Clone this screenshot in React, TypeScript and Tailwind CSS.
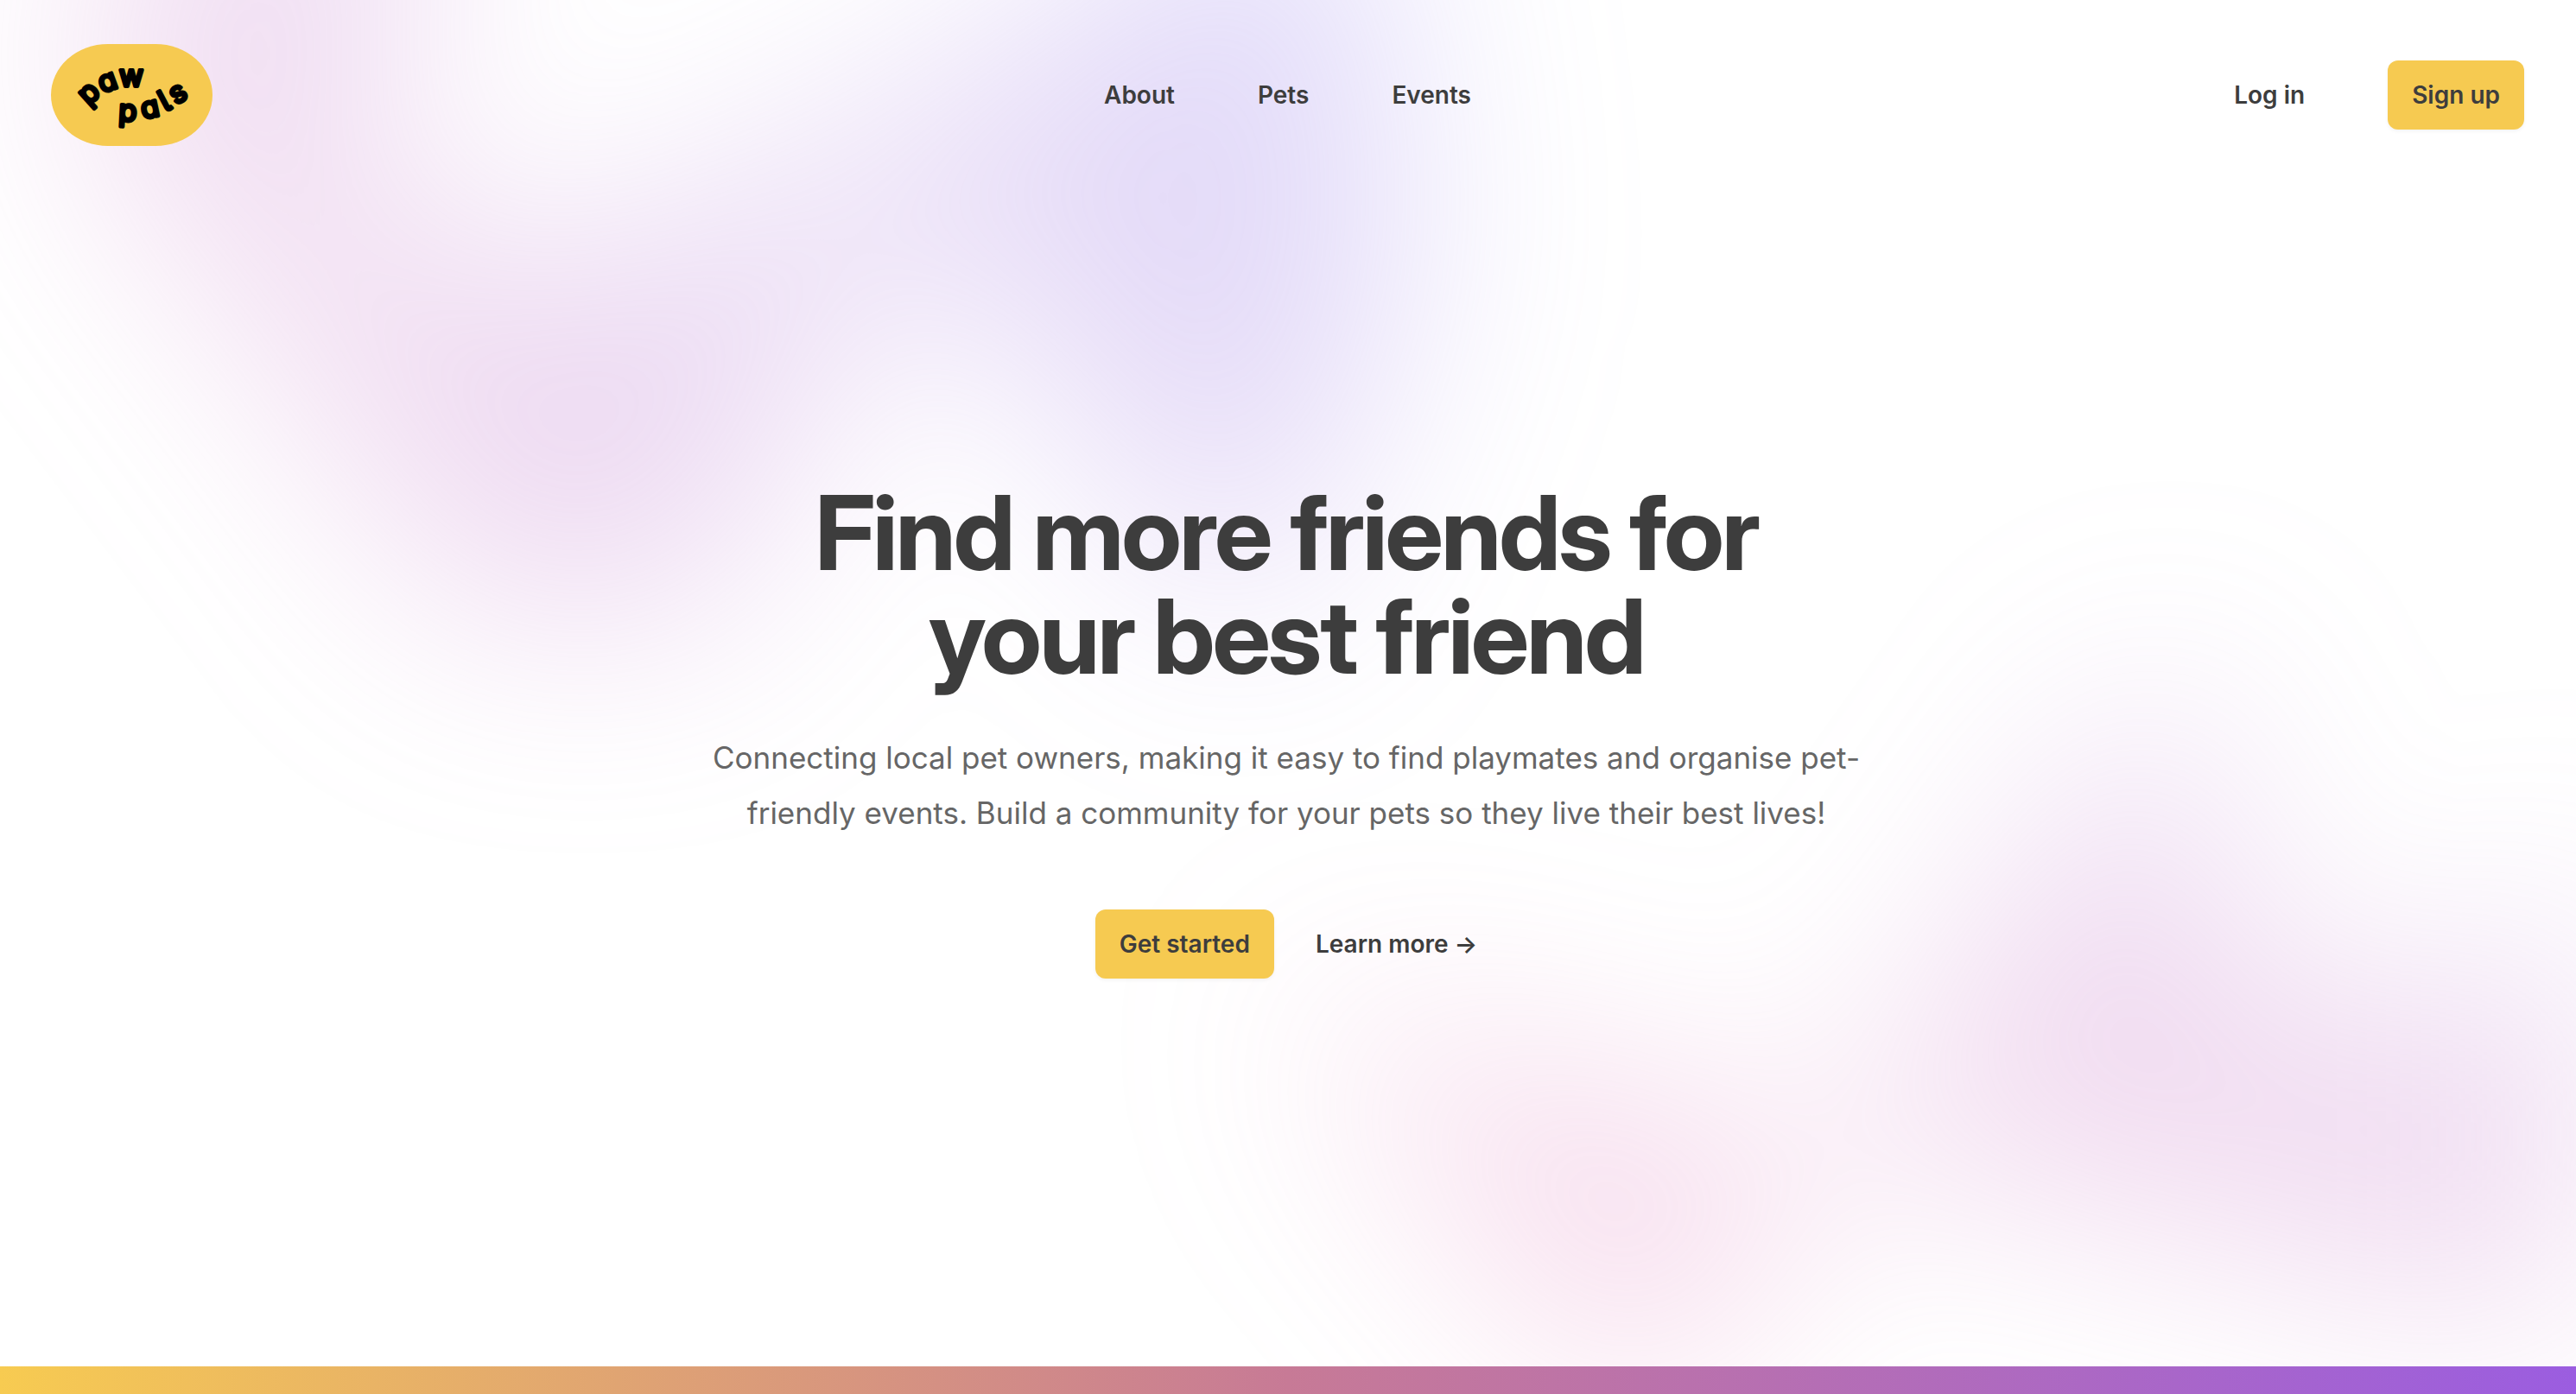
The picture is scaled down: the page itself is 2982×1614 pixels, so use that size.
const TOP_BLOB =
  "[clip-path:polygon(74.1%_44.1%,100%_61.6%,97.5%_26.9%,85.5%_0.1%,80.7%_2%,72.5%_32.5%,60.2%_62.4%,52.4%_68.1%,47.5%_58.3%,45.2%_34.5%,31.7%_47.7%,36%_72%,74%_99%,76.1%_97.7%,74.1%_44.1%)]";

const BOTTOM_BLOB =
  "[clip-path:polygon(74.1%_44.1%,100%_61.6%,97.5%_26.9%,85.5%_0.1%,80.7%_2%,72.5%_32.5%,60.2%_62.4%,52.4%_68.1%,47.5%_58.3%,45.2%_34.5%,27.5%_76.7%,0.1%_64.9%,17.9%_100%,27.6%_76.8%,76.1%_97.7%,74.1%_44.1%)]";

type Glyph = { cx: number; cy: number; angle: number; advance: number };

const LOGO_SIZE = 34;
const HALF_X_HEIGHT = 9;

const PAW: Glyph[] = [
  { cx: 45, cy: 58, angle: -42, advance: 21 },
  { cx: 66, cy: 45, angle: -20, advance: 21 },
  { cx: 93, cy: 40, angle: 0, advance: 28 },
];

const PALS: Glyph[] = [
  { cx: 89, cy: 80, angle: 3, advance: 21 },
  { cx: 115, cy: 76, angle: -12, advance: 21 },
  { cx: 133, cy: 68, angle: -28, advance: 11 },
  { cx: 148, cy: 58, angle: -32, advance: 19 },
];

// Turns each glyph's centre into the baseline origin that SVG text rotates around.
function layout(glyphs: Glyph[]) {
  const points = glyphs.map(({ cx, cy, angle, advance }) => {
    const t = (angle * Math.PI) / 180;
    const dx = advance / 2;
    const dy = -HALF_X_HEIGHT;
    return {
      x: cx - (dx * Math.cos(t) - dy * Math.sin(t)),
      y: cy - (dx * Math.sin(t) + dy * Math.cos(t)),
    };
  });
  return {
    x: points.map((p) => p.x.toFixed(1)).join(" "),
    y: points.map((p) => p.y.toFixed(1)).join(" "),
    rotate: glyphs.map((g) => g.angle).join(" "),
  };
}

function Logo() {
  return (
    <svg
      viewBox="0 0 187 118"
      className="h-[118px] w-[187px] font-['Inter',sans-serif] font-normal [font-feature-settings:'cv11','cv05']"
      aria-hidden="true"
    >
      <rect width="187" height="118" rx="66" ry="59" fill="#f6ca51" />
      <g fill="#000" stroke="#000" strokeWidth="4" strokeLinejoin="round" fontSize={LOGO_SIZE}>
        <text {...layout(PAW)}>paw</text>
        <text {...layout(PALS)}>pals</text>
      </g>
    </svg>
  );
}

const NAV = ["About", "Pets", "Events"];

function PrimaryButton({ children }: { children: string }) {
  return (
    <button
      type="button"
      className="rounded-xl bg-[#f6ca51] px-7 py-5 text-[28px] leading-10 font-semibold text-[#3d3d3d] shadow-[0_2px_4px_rgba(0,0,0,0.05)]"
    >
      {children}
    </button>
  );
}

function Header() {
  return (
    <header className="flex items-center justify-between pt-[51px] pr-14 pl-[59px]">
      <div className="flex flex-1">
        <a href="#" aria-label="Paw Pals home">
          <Logo />
        </a>
      </div>
      <nav aria-label="Main" className="flex gap-x-24">
        {NAV.map((item) => (
          <a key={item} href="#" className="text-[28px] leading-12 font-semibold">
            {item}
          </a>
        ))}
      </nav>
      <div className="flex flex-1 items-center justify-end gap-x-24">
        <a href="#" className="text-[28px] leading-12 font-semibold">
          Log in
        </a>
        <PrimaryButton>Sign up</PrimaryButton>
      </div>
    </header>
  );
}

export default function App() {
  return (
    <div className="flex min-h-screen flex-col bg-white font-['Inter',sans-serif] text-[#3d3d3d] antialiased">
      <div className="relative isolate flex flex-1 flex-col overflow-hidden pr-1">
        <div className="absolute inset-x-0 -top-[640px] -z-10 overflow-hidden blur-[128px]" aria-hidden="true">
          <div
            className={
              "relative left-[calc(50%-960px)] aspect-[1155/678] w-[2310px] -translate-x-1/2 rotate-30 bg-linear-to-tr/srgb from-[#f080b2] to-[#8c86f6] opacity-30 " +
              TOP_BLOB
            }
          />
        </div>
        <div className="absolute inset-x-0 top-[calc(100%-1300px)] -z-10 overflow-hidden blur-[128px]" aria-hidden="true">
          <div
            className={
              "relative left-[calc(50%+1152px)] aspect-[1155/678] w-[2310px] -translate-x-1/2 bg-linear-to-tr/srgb from-[#f080b2] to-[#8c86f6] opacity-30 " +
              BOTTOM_BLOB
            }
          />
        </div>
        <Header />
        <main className="mx-auto w-full max-w-[1344px] pt-[388px] text-center">
          <h1 className="font-['Inter_Display','Inter',sans-serif] text-[120px] leading-none font-bold tracking-tight">
            Find more friends for your best friend
          </h1>
          <p className="mt-12 text-[35px] leading-16 text-[#666]">
            Connecting local pet owners, making it easy to find playmates and organise pet-friendly events. Build a
            community for your pets so they live their best lives!
          </p>
          <div className="mt-20 flex items-center justify-center gap-x-12">
            <PrimaryButton>Get started</PrimaryButton>
            <a href="#" className="text-[28px] leading-12 font-semibold">
              Learn more <span aria-hidden="true">→</span>
            </a>
          </div>
        </main>
      </div>
      <footer className="h-8 bg-linear-to-r/srgb from-[#f7cb51] via-[#c77a96] to-[#9b5de0]" />
    </div>
  );
}
